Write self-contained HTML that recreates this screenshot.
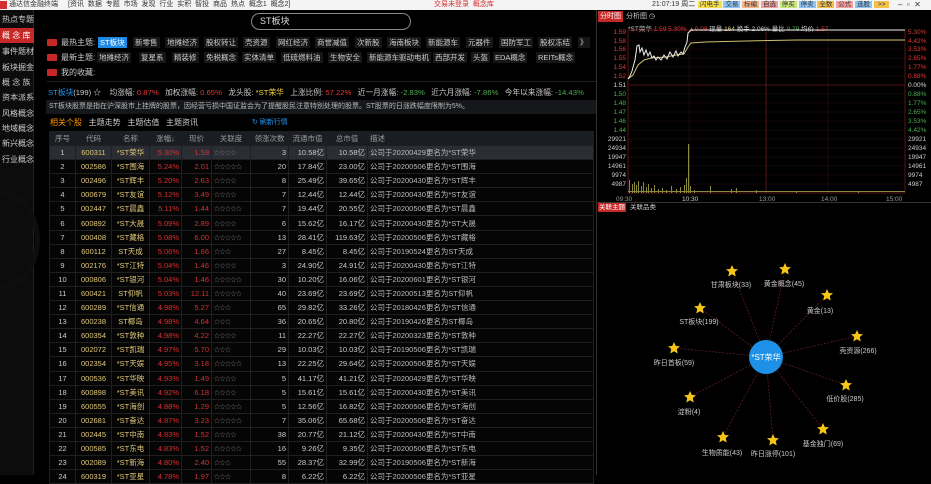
<!DOCTYPE html>
<html><head><meta charset="utf-8">
<style>
*{margin:0;padding:0;box-sizing:border-box}
body{width:931px;height:475px;background:#000;overflow:hidden;position:relative;font-family:"Liberation Sans","Noto Sans CJK SC",sans-serif;font-size:8px;color:#ccc}
.a{position:absolute;white-space:nowrap}
#top{left:0;top:0;width:931px;height:10px;background:#f4f4f4;color:#333;font-size:7px;line-height:10px}
#side{left:0;top:10px;width:34px;height:465px;background:#0c0c0c;border-right:1px solid #222}
.si{position:absolute;left:0;width:34px;height:15px;line-height:15px;padding-left:2px;color:#ccc;font-size:8px}
.tag{position:absolute;height:11px;line-height:11px;padding:0 2px;background:#161616;color:#ccc;font-size:7.5px}
.hot{position:absolute;width:10px;height:7px;background:#c62828;border-radius:1px}
table{border-collapse:collapse;table-layout:fixed;position:absolute;left:49px;top:131px;width:545px}
td{height:14.1px;border:1px solid #1f1f1f;text-align:center;font-size:7.5px;padding:0 2px;overflow:hidden;white-space:nowrap;color:#ccc;background:#050505}
tr.h td{height:14px;background:#1a1d22;color:#999}
td.c{color:#e0c878}td.n{color:#e0c878}td.r{color:#d83030;text-align:right}td.s{color:#777;font-size:6px;text-align:left;letter-spacing:-0.5px}
td.rr{text-align:right}td.d{text-align:left;color:#bbb}
tr.sel td{background:#2a2d33}
</style></head><body>
<div id="top" class="a">
 <span class="a" style="left:0;top:1px;width:7px;height:8px;background:#d32f2f"></span>
 <span class="a" style="left:9px">通达信金融终端</span>
 <span class="a" style="left:68px">[资讯&nbsp; 数据&nbsp; 专题&nbsp; 市场&nbsp; 发现&nbsp; 行业&nbsp; 实积&nbsp; 智投&nbsp; 商品&nbsp; 热点&nbsp; 概念1&nbsp; 概念2]</span>
 <span class="a" style="left:434px;color:#d32f2f">交易未登录&nbsp; 概念库</span>
 <span class="a" style="left:652px">21:07:19 周二</span>
 <span class="a" style="left:698px;top:1px;height:8px;line-height:8px;font-size:6.5px">
  <span style="background:#f5e04a;padding:0 2px">闪电手</span> <span style="background:#8ec5f5;padding:0 2px">交易</span> <span style="background:#f5b48a;padding:0 2px">标编</span> <span style="background:#f5a0a0;padding:0 2px">自选</span> <span style="background:#c8e67a;padding:0 2px">停买</span> <span style="background:#8ec5f5;padding:0 2px">停卖</span> <span style="background:#f5c04a;padding:0 2px">全数</span> <span style="background:#f5a0a0;padding:0 2px">公式</span> <span style="background:#8ec5f5;padding:0 2px">选股</span> <span style="background:#f5c04a;padding:0 4px">&gt;&gt;</span></span>
 <span class="a" style="left:898px;font-size:8px">–&nbsp; ▫&nbsp; ✕</span>
</div>
<div id="side" class="a">
 <div class="si" style="top:2px">热点专题</div>
 <div class="si" style="top:18px;background:#c62828;color:#fff">概 念 库</div>
 <div class="si" style="top:34px">事件题材</div>
 <div class="si" style="top:50px">板块掘金</div>
 <div class="si" style="top:65px">概 念 族</div>
 <div class="si" style="top:80px">资本派系</div>
 <div class="si" style="top:96px">风格概念</div>
 <div class="si" style="top:111px">地域概念</div>
 <div class="si" style="top:126px">新兴概念</div>
 <div class="si" style="top:142px">行业概念</div>
</div>
<div class="a" style="left:-40px;top:190px;width:80px;height:100px;border:5px solid #0e0e0e;border-radius:50%"></div>
<div class="a" style="left:838px;top:196px;width:90px;height:90px;border:5px solid #0e0e0e;border-radius:50%"></div>

<div class="a" style="left:251px;top:13px;width:160px;height:17px;border:1px solid #888;border-radius:9px;color:#ddd;font-size:9px;line-height:15px;padding-left:8px">ST板块</div>

<div class="hot" style="left:47px;top:39px"></div><span class="a" style="left:61px;top:37px;color:#ccc">最热主题:</span>
<div class="tag" style="left:98px;top:37px;background:#1e88e5;color:#fff">ST板块</div>
<div class="tag" style="left:133px;top:37px">新零售</div>
<div class="tag" style="left:165px;top:37px">地摊经济</div>
<div class="tag" style="left:204px;top:37px">股权转让</div>
<div class="tag" style="left:243px;top:37px">壳资源</div>
<div class="tag" style="left:276px;top:37px">网红经济</div>
<div class="tag" style="left:315px;top:37px">商誉减值</div>
<div class="tag" style="left:355px;top:37px">次新股</div>
<div class="tag" style="left:387px;top:37px">海南板块</div>
<div class="tag" style="left:426px;top:37px">新能源车</div>
<div class="tag" style="left:466px;top:37px">元器件</div>
<div class="tag" style="left:499px;top:37px">国防军工</div>
<div class="tag" style="left:538px;top:37px">股权冻结</div>
<div class="tag" style="left:578px;top:37px">》</div>
<div class="hot" style="left:47px;top:54px"></div><span class="a" style="left:61px;top:52px">最新主题:</span>
<div class="tag" style="left:97px;top:52px">地摊经济</div>
<div class="tag" style="left:139px;top:52px">复星系</div>
<div class="tag" style="left:172px;top:52px">精装修</div>
<div class="tag" style="left:204px;top:52px">免税概念</div>
<div class="tag" style="left:242px;top:52px">实体清单</div>
<div class="tag" style="left:281px;top:52px">低硫燃料油</div>
<div class="tag" style="left:328px;top:52px">生物安全</div>
<div class="tag" style="left:367px;top:52px">新能源车驱动电机</div>
<div class="tag" style="left:433px;top:52px">西部开发</div>
<div class="tag" style="left:471px;top:52px">头盔</div>
<div class="tag" style="left:493px;top:52px">EDA概念</div>
<div class="tag" style="left:536px;top:52px">REITs概念</div>
<div class="hot" style="left:47px;top:69px"></div><span class="a" style="left:61px;top:67px">我的收藏:</span>
<div class="a" style="left:47px;top:81px;width:550px;height:1px;background:#222"></div>

<div class="a" style="left:48px;top:87px;font-size:7.7px"><span style="color:#2196f3">ST板块</span>(199) ☆&nbsp;&nbsp;&nbsp; 均涨幅: <span style="color:#e53935">0.87%</span>&nbsp;&nbsp; 加权涨幅: <span style="color:#e53935">0.65%</span>&nbsp;&nbsp; 龙头股: <span style="color:#f5d442">*ST荣华</span>&nbsp;&nbsp; 上涨比例: <span style="color:#e53935">57.22%</span>&nbsp;&nbsp; 近一月涨幅: <span style="color:#4caf50">-2.83%</span>&nbsp;&nbsp; 近六月涨幅: <span style="color:#4caf50">-7.86%</span>&nbsp;&nbsp; 今年以来涨幅: <span style="color:#4caf50">-14.43%</span></div>
<div class="a" style="left:46px;top:100px;width:551px;height:14px;background:#15171a;color:#bbb;font-size:7px;line-height:14px;padding-left:3px">ST板块股票是指在沪深股市上挂牌的股票，因经营亏损中国证监会为了提醒股民注意特别处理的股票。ST股票的日涨跌幅度限制为5%。</div>
<div class="a" style="left:50px;top:117px;font-size:8px"><span style="color:#ff9800">相关个股</span>&nbsp;&nbsp; 主题走势&nbsp;&nbsp; 主题估值&nbsp;&nbsp; 主题资讯</div>
<div class="a" style="left:252px;top:117px;font-size:7px;color:#2196f3">↻ 刷新行情</div>

<table>
<colgroup><col style="width:26px"><col style="width:36px"><col style="width:38px"><col style="width:32px"><col style="width:30px"><col style="width:39px"><col style="width:38px"><col style="width:38px"><col style="width:41px"><col></colgroup>
<tr class="h"><td>序号</td><td>代码</td><td>名称</td><td>涨幅↓</td><td>现价</td><td>关联度</td><td>领涨次数</td><td>流通市值</td><td>总市值</td><td class="d" style="color:#999">描述</td></tr>
<tr class="sel"><td>1</td><td class="c">600311</td><td class="n">*ST荣华</td><td class="r">5.30%</td><td class="r">1.59</td><td class="s">☆☆☆☆</td><td class="rr">3</td><td class="rr">10.58亿</td><td class="rr">10.58亿</td><td class="d">公司于20200429更名为*ST荣华</td></tr>
<tr><td>2</td><td class="c">002586</td><td class="n">*ST围海</td><td class="r">5.24%</td><td class="r">2.01</td><td class="s">☆☆☆☆☆</td><td class="rr">20</td><td class="rr">17.84亿</td><td class="rr">23.00亿</td><td class="d">公司于20200506更名为*ST围海</td></tr>
<tr><td>3</td><td class="c">002496</td><td class="n">*ST辉丰</td><td class="r">5.20%</td><td class="r">2.63</td><td class="s">☆☆☆☆</td><td class="rr">8</td><td class="rr">25.49亿</td><td class="rr">39.65亿</td><td class="d">公司于20200430更名为*ST辉丰</td></tr>
<tr><td>4</td><td class="c">000679</td><td class="n">*ST友谊</td><td class="r">5.12%</td><td class="r">3.49</td><td class="s">☆☆☆☆</td><td class="rr">7</td><td class="rr">12.44亿</td><td class="rr">12.44亿</td><td class="d">公司于20200430更名为*ST友谊</td></tr>
<tr><td>5</td><td class="c">002447</td><td class="n">*ST晨鑫</td><td class="r">5.11%</td><td class="r">1.44</td><td class="s">☆☆☆☆☆</td><td class="rr">7</td><td class="rr">19.44亿</td><td class="rr">20.55亿</td><td class="d">公司于20200506更名为*ST晨鑫</td></tr>
<tr><td>6</td><td class="c">600892</td><td class="n">*ST大晟</td><td class="r">5.09%</td><td class="r">2.89</td><td class="s">☆☆☆☆</td><td class="rr">6</td><td class="rr">15.62亿</td><td class="rr">16.17亿</td><td class="d">公司于20200430更名为*ST大晟</td></tr>
<tr><td>7</td><td class="c">000408</td><td class="n">*ST藏格</td><td class="r">5.08%</td><td class="r">6.00</td><td class="s">☆☆☆☆☆</td><td class="rr">13</td><td class="rr">28.41亿</td><td class="rr">119.63亿</td><td class="d">公司于20200506更名为*ST藏格</td></tr>
<tr><td>8</td><td class="c">600112</td><td class="n">ST天成</td><td class="r">5.06%</td><td class="r">1.66</td><td class="s">☆☆☆</td><td class="rr">27</td><td class="rr">8.45亿</td><td class="rr">8.45亿</td><td class="d">公司于20190524更名为ST天成</td></tr>
<tr><td>9</td><td class="c">002176</td><td class="n">*ST江特</td><td class="r">5.04%</td><td class="r">1.46</td><td class="s">☆☆☆☆</td><td class="rr">3</td><td class="rr">24.90亿</td><td class="rr">24.91亿</td><td class="d">公司于20200430更名为*ST江特</td></tr>
<tr><td>10</td><td class="c">000806</td><td class="n">*ST银河</td><td class="r">5.04%</td><td class="r">1.46</td><td class="s">☆☆☆☆☆</td><td class="rr">30</td><td class="rr">10.20亿</td><td class="rr">16.06亿</td><td class="d">公司于20200601更名为*ST银河</td></tr>
<tr><td>11</td><td class="c">600421</td><td class="n">ST仰帆</td><td class="r">5.03%</td><td class="r">12.11</td><td class="s">☆☆☆☆☆</td><td class="rr">40</td><td class="rr">23.69亿</td><td class="rr">23.69亿</td><td class="d">公司于20200513更名为ST仰帆</td></tr>
<tr><td>12</td><td class="c">600289</td><td class="n">*ST信通</td><td class="r">4.98%</td><td class="r">5.27</td><td class="s">☆☆☆</td><td class="rr">65</td><td class="rr">29.82亿</td><td class="rr">33.26亿</td><td class="d">公司于20180426更名为*ST信通</td></tr>
<tr><td>13</td><td class="c">600238</td><td class="n">ST椰岛</td><td class="r">4.98%</td><td class="r">4.64</td><td class="s">☆☆☆</td><td class="rr">36</td><td class="rr">20.65亿</td><td class="rr">20.80亿</td><td class="d">公司于20190426更名为ST椰岛</td></tr>
<tr><td>14</td><td class="c">600354</td><td class="n">*ST敦种</td><td class="r">4.98%</td><td class="r">4.22</td><td class="s">☆☆☆☆</td><td class="rr">11</td><td class="rr">22.27亿</td><td class="rr">22.27亿</td><td class="d">公司于20200323更名为*ST敦种</td></tr>
<tr><td>15</td><td class="c">002072</td><td class="n">*ST凯瑞</td><td class="r">4.97%</td><td class="r">5.70</td><td class="s">☆☆☆</td><td class="rr">29</td><td class="rr">10.03亿</td><td class="rr">10.03亿</td><td class="d">公司于20190506更名为*ST凯瑞</td></tr>
<tr><td>16</td><td class="c">002354</td><td class="n">*ST天娱</td><td class="r">4.95%</td><td class="r">3.18</td><td class="s">☆☆☆☆☆</td><td class="rr">13</td><td class="rr">22.25亿</td><td class="rr">29.64亿</td><td class="d">公司于20200506更名为*ST天娱</td></tr>
<tr><td>17</td><td class="c">000536</td><td class="n">*ST华映</td><td class="r">4.93%</td><td class="r">1.49</td><td class="s">☆☆☆☆</td><td class="rr">5</td><td class="rr">41.17亿</td><td class="rr">41.21亿</td><td class="d">公司于20200429更名为*ST华映</td></tr>
<tr><td>18</td><td class="c">600898</td><td class="n">*ST美讯</td><td class="r">4.92%</td><td class="r">6.18</td><td class="s">☆☆☆☆</td><td class="rr">5</td><td class="rr">15.61亿</td><td class="rr">15.61亿</td><td class="d">公司于20200430更名为*ST美讯</td></tr>
<tr><td>19</td><td class="c">600555</td><td class="n">*ST海创</td><td class="r">4.88%</td><td class="r">1.29</td><td class="s">☆☆☆☆☆</td><td class="rr">5</td><td class="rr">12.56亿</td><td class="rr">16.82亿</td><td class="d">公司于20200506更名为*ST海创</td></tr>
<tr><td>20</td><td class="c">002681</td><td class="n">*ST奋达</td><td class="r">4.87%</td><td class="r">3.23</td><td class="s">☆☆☆☆☆</td><td class="rr">7</td><td class="rr">35.06亿</td><td class="rr">65.68亿</td><td class="d">公司于20200506更名为*ST奋达</td></tr>
<tr><td>21</td><td class="c">002445</td><td class="n">*ST中南</td><td class="r">4.83%</td><td class="r">1.52</td><td class="s">☆☆☆☆</td><td class="rr">38</td><td class="rr">20.77亿</td><td class="rr">21.12亿</td><td class="d">公司于20200430更名为*ST中南</td></tr>
<tr><td>22</td><td class="c">000585</td><td class="n">*ST东电</td><td class="r">4.83%</td><td class="r">1.52</td><td class="s">☆☆☆☆☆</td><td class="rr">16</td><td class="rr">9.26亿</td><td class="rr">9.35亿</td><td class="d">公司于20200506更名为*ST东电</td></tr>
<tr><td>23</td><td class="c">002089</td><td class="n">*ST新海</td><td class="r">4.80%</td><td class="r">2.40</td><td class="s">☆☆☆</td><td class="rr">55</td><td class="rr">28.37亿</td><td class="rr">32.99亿</td><td class="d">公司于20190506更名为*ST新海</td></tr>
<tr><td>24</td><td class="c">600319</td><td class="n">*ST亚星</td><td class="r">4.78%</td><td class="r">1.97</td><td class="s">☆☆☆</td><td class="rr">8</td><td class="rr">6.22亿</td><td class="rr">6.22亿</td><td class="d">公司于20200506更名为*ST亚星</td></tr>
</table>

<div class="a" style="left:596px;top:10px;width:335px;height:465px;background:#000;border-left:1px solid #333"></div>
<div class="a" style="left:598px;top:11px;width:25px;height:11px;background:#c62828;color:#fff;font-size:7px;line-height:11px;text-align:center">分时图</div>
<div class="a" style="left:626px;top:11px;color:#ccc;font-size:7px;line-height:11px">分析图 ◷</div>
<div class="a" style="left:628px;top:23px;font-size:6.5px;color:#ccc">*ST荣华 <span style="color:#e53935">1.59 5.30% ▲0.08</span> 现量 <span style="color:#e6cc7a">164</span> 换手 2.06% 量比 <span style="color:#4caf50">0.79</span> 均价 <span style="color:#e53935">1.57</span></div>
<svg class="a" style="left:596px;top:10px" width="335" height="200">
 <g stroke="#2a0c0c" stroke-width="0.6">
  <line x1="32" y1="22" x2="309" y2="22"/><line x1="32" y1="31" x2="309" y2="31"/><line x1="32" y1="39" x2="309" y2="39"/><line x1="32" y1="48" x2="309" y2="48"/><line x1="32" y1="57" x2="309" y2="57"/><line x1="32" y1="66" x2="309" y2="66"/><line x1="32" y1="84" x2="309" y2="84"/><line x1="32" y1="93" x2="309" y2="93"/><line x1="32" y1="102" x2="309" y2="102"/><line x1="32" y1="111" x2="309" y2="111"/><line x1="32" y1="120" x2="309" y2="120"/>
  <line x1="32" y1="129" x2="309" y2="129"/><line x1="32" y1="138" x2="309" y2="138"/><line x1="32" y1="147" x2="309" y2="147"/><line x1="32" y1="156" x2="309" y2="156"/><line x1="32" y1="165" x2="309" y2="165"/><line x1="32" y1="174" x2="309" y2="174"/>
  <line x1="93" y1="22" x2="93" y2="183"/><line x1="232" y1="22" x2="232" y2="183"/>
 </g>
 <line x1="32" y1="75" x2="309" y2="75" stroke="#6a1818" stroke-width="0.8"/>
 <line x1="170" y1="22" x2="170" y2="183" stroke="#6a1818" stroke-width="0.8"/>
 <rect x="32" y="20" width="277" height="163" fill="none" stroke="#6a1818" stroke-width="0.8"/>
 <polyline fill="none" stroke="#c8c070" stroke-width="1" points="32,69 37,65 42,55 48,50 55,48 70,47 80,45 88,44 92,37 95,33 110,32 150,31 200,30 309,30"/>
 <polyline fill="none" stroke="#eee" stroke-width="1" points="32,69 34,66 36,61 39,50 41,36 43,35 44,42 46,38 48,45 50,40 52,46 54,42 56,48 58,46 60,50 62,47 65,50 68,45 71,49 74,42 77,47 80,41 82,46 85,42 87,44 89,37 91,32 92,23 95,20 309,20"/>
 <g fill="#8a8a3a">
  <rect x="33" y="170" width="1" height="13"/><rect x="36" y="174" width="1" height="9"/><rect x="38" y="172" width="1" height="11"/><rect x="40" y="175" width="1" height="8"/><rect x="42" y="171" width="1" height="12"/><rect x="45" y="176" width="1" height="7"/><rect x="47" y="172" width="1" height="11"/><rect x="50" y="177" width="1" height="6"/><rect x="52" y="174" width="1" height="9"/><rect x="55" y="178" width="1" height="5"/><rect x="58" y="175" width="1" height="8"/><rect x="62" y="179" width="1" height="4"/><rect x="66" y="178" width="1" height="5"/><rect x="70" y="180" width="1" height="3"/><rect x="75" y="176" width="1" height="7"/><rect x="80" y="179" width="1" height="4"/><rect x="84" y="177" width="1" height="6"/><rect x="88" y="175" width="1" height="8"/><rect x="90" y="168" width="1" height="15"/><rect x="92" y="134" width="1.2" height="49"/><rect x="94" y="176" width="1" height="7"/><rect x="98" y="180" width="1" height="3"/><rect x="114" y="176" width="1" height="7"/><rect x="135" y="179" width="1" height="4"/><rect x="140" y="178" width="1" height="5"/><rect x="160" y="180" width="1" height="3"/><rect x="200" y="181" width="1" height="2"/><rect x="262" y="181" width="1" height="2"/>
  <rect x="32" y="181" width="277" height="1"/>
 </g>
 <g font-size="6.5" font-family="Liberation Sans" text-anchor="end">
  <text x="30" y="24" fill="#e53935">1.59</text><text x="30" y="33" fill="#e53935">1.58</text><text x="30" y="41" fill="#e53935">1.56</text><text x="30" y="50" fill="#e53935">1.55</text><text x="30" y="59" fill="#e53935">1.54</text><text x="30" y="68" fill="#e53935">1.52</text><text x="30" y="77" fill="#ddd">1.51</text><text x="30" y="86" fill="#4caf50">1.50</text><text x="30" y="95" fill="#4caf50">1.48</text><text x="30" y="104" fill="#4caf50">1.47</text><text x="30" y="113" fill="#4caf50">1.46</text><text x="30" y="122" fill="#4caf50">1.44</text>
  <text x="30" y="131" fill="#ccc">29921</text><text x="30" y="140" fill="#ccc">24934</text><text x="30" y="149" fill="#ccc">19947</text><text x="30" y="158" fill="#ccc">14961</text><text x="30" y="167" fill="#ccc">9974</text><text x="30" y="176" fill="#ccc">4987</text>
 </g>
 <g font-size="6.5" font-family="Liberation Sans">
  <text x="312" y="24" fill="#e53935">5.30%</text><text x="312" y="33" fill="#e53935">4.42%</text><text x="312" y="41" fill="#e53935">3.53%</text><text x="312" y="50" fill="#e53935">2.65%</text><text x="312" y="59" fill="#e53935">1.77%</text><text x="312" y="68" fill="#e53935">0.88%</text><text x="312" y="77" fill="#ddd">0.00%</text><text x="312" y="86" fill="#4caf50">0.88%</text><text x="312" y="95" fill="#4caf50">1.77%</text><text x="312" y="104" fill="#4caf50">2.65%</text><text x="312" y="113" fill="#4caf50">3.53%</text><text x="312" y="122" fill="#4caf50">4.42%</text>
  <text x="312" y="131" fill="#ccc">29921</text><text x="312" y="140" fill="#ccc">24934</text><text x="312" y="149" fill="#ccc">19947</text><text x="312" y="158" fill="#ccc">14961</text><text x="312" y="167" fill="#ccc">9974</text><text x="312" y="176" fill="#ccc">4987</text>
  <text x="20" y="191" fill="#999">09:30</text><text x="86" y="191" fill="#ccc">10:30</text><text x="163" y="191" fill="#999">13:00</text><text x="225" y="191" fill="#999">14:00</text><text x="290" y="191" fill="#999">15:00</text>
 </g>
</svg>
<div class="a" style="left:597px;top:202px;width:334px;height:1px;background:#333"></div>
<div class="a" style="left:598px;top:203px;width:28px;height:9px;background:#c62828;color:#fff;font-size:6.5px;line-height:9px;text-align:center">关联主题</div>
<div class="a" style="left:630px;top:203px;color:#ccc;font-size:6.5px;line-height:9px">关联品类</div>

<svg class="a" style="left:596px;top:212px" width="335" height="263">
 <defs><path id="st" d="M0,-6 L1.8,-2 6,-1.8 2.8,1 3.7,5.5 0,3.2 -3.7,5.5 -2.8,1 -6,-1.8 -1.8,-2Z" fill="#f5c518"/></defs>
 <g stroke="#6e2222" stroke-width="0.7" stroke-dasharray="2,1.5">
  <line x1="170" y1="145" x2="136" y2="59"/><line x1="170" y1="145" x2="189" y2="57"/><line x1="170" y1="145" x2="231" y2="83"/><line x1="170" y1="145" x2="261" y2="124"/><line x1="170" y1="145" x2="250" y2="173"/><line x1="170" y1="145" x2="227" y2="217"/><line x1="170" y1="145" x2="177" y2="228"/><line x1="170" y1="145" x2="127" y2="225"/><line x1="170" y1="145" x2="94" y2="185"/><line x1="170" y1="145" x2="78" y2="136"/><line x1="170" y1="145" x2="104" y2="96"/>
 </g>
 <use href="#st" x="136" y="59"/><use href="#st" x="189" y="57"/><use href="#st" x="231" y="83"/><use href="#st" x="261" y="124"/><use href="#st" x="250" y="173"/><use href="#st" x="227" y="217"/><use href="#st" x="177" y="228"/><use href="#st" x="127" y="225"/><use href="#st" x="94" y="185"/><use href="#st" x="78" y="136"/><use href="#st" x="104" y="96"/>
 <circle cx="170" cy="145" r="17" fill="#1e90e8"/>
 <g font-family="Liberation Sans,Noto Sans CJK SC,sans-serif" font-size="7" fill="#ccc" text-anchor="middle">
  <text x="170" y="148" fill="#fff" font-size="8">*ST荣华</text>
  <text x="135" y="75">甘肃板块(33)</text><text x="188" y="74">黄金概念(45)</text><text x="224" y="101">黄金(13)</text><text x="262" y="141">壳资源(266)</text><text x="249" y="189">低价股(285)</text><text x="227" y="234">基金独门(69)</text><text x="177" y="244">昨日涨停(101)</text><text x="126" y="243">生物质能(43)</text><text x="93" y="202">淀粉(4)</text><text x="78" y="153">昨日首板(59)</text><text x="103" y="112">ST板块(199)</text>
 </g>
</svg>
</body></html>
